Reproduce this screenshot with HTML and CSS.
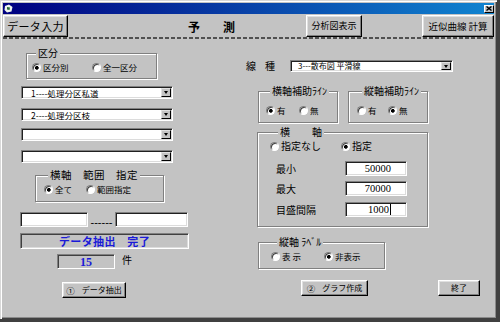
FILE: index.html
```html
<!DOCTYPE html>
<html lang="ja">
<head>
<meta charset="utf-8">
<title>予測</title>
<link rel="stylesheet" href="styles.css">
</head>
<body>
<div class="window">
  <div class="titlebar">
    <svg class="appicon" width="9" height="9" viewBox="0 0 9 9"><path d="M1 2 L5 0.5 L8.5 3 L7.5 7.5 L3 8.5 L0.5 6 Z" fill="#eef4ee"/><path d="M3 3 L6 3.5 L5.5 6 L3 5.5 Z" fill="#2a6a3a"/></svg>
    <span class="closebtn"><svg width="6" height="5" viewBox="0 0 6 5"><path d="M0.5 0.5 L5.5 4.5 M5.5 0.5 L0.5 4.5" stroke="#000" stroke-width="1.4"/></svg></span>
  </div>

  <div class="toolbar">
    <div class="btn tb-input">データ入力</div>
    <div class="caption"><span>予</span><span class="cap-2nd">測</span></div>
    <div class="btn tb-chart">分析図表示</div>
    <div class="btn tb-calc">近似曲線 計算</div>
  </div>

  <div class="client">
    <!-- 左側 -->
    <div class="col-left">
      <fieldset class="group g-kubun">
        <legend>区分</legend>
        <div class="radios small">
          <div class="radio on">区分別</div>
          <div class="radio">全一区分</div>
        </div>
      </fieldset>

      <div class="combo cb1"><span>1----処理分区私道</span><i></i></div>
      <div class="combo cb2"><span>2----処理分区枝</span><i></i></div>
      <div class="combo cb3"><span></span><i></i></div>
      <div class="combo cb4"><span></span><i></i></div>

      <fieldset class="group g-range">
        <legend>横軸　範囲　指定</legend>
        <div class="radios small">
          <div class="radio on">全て</div>
          <div class="radio">範囲指定</div>
        </div>
      </fieldset>

      <div class="range-row">
        <div class="field r1"></div>
        <span class="dashes">------</span>
        <div class="field r2"></div>
      </div>

      <div class="status">データ抽出　完了</div>

      <div class="count-row">
        <div class="count">15</div>
        <span class="unit">件</span>
      </div>

      <div class="btn small-btn b-extract"><span class="num">①</span>データ抽出</div>
    </div>

    <!-- 右側 -->
    <div class="col-right">
      <div class="linetype">
        <span class="lt-label">線</span><span class="lt-label">種</span>
        <div class="combo c-type"><span>3---散布図 平滑線</span><i></i></div>
      </div>

      <div class="aux-row">
        <fieldset class="group g-auxx">
          <legend>横軸補助ﾗｲﾝ</legend>
          <div class="radios small">
            <div class="radio on">有</div>
            <div class="radio">無</div>
          </div>
        </fieldset>
        <fieldset class="group g-auxy">
          <legend>縦軸補助ﾗｲﾝ</legend>
          <div class="radios small">
            <div class="radio">有</div>
            <div class="radio on">無</div>
          </div>
        </fieldset>
      </div>

      <fieldset class="group g-axis">
        <legend>横<span class="leg-gap">軸</span></legend>
        <div class="radios">
          <div class="radio">指定なし</div>
          <div class="radio on">指定</div>
        </div>
        <div class="axis-row a1"><span>最小</span><div class="field num-field">50000</div></div>
        <div class="axis-row a2"><span>最大</span><div class="field num-field">70000</div></div>
        <div class="axis-row a3"><span>目盛間隔</span><div class="field num-field">1000<i class="caret"></i></div></div>
      </fieldset>

      <fieldset class="group g-label">
        <legend>縦軸&nbsp;ﾗﾍﾞﾙ</legend>
        <div class="radios small">
          <div class="radio">表 示</div>
          <div class="radio on">非表示</div>
        </div>
      </fieldset>

      <div class="bottom-row">
        <div class="btn small-btn b-graph"><span class="num">②</span>グラフ作成</div>
        <div class="btn small-btn b-exit">終了</div>
      </div>
    </div>
  </div>
</div>
</body>
</html>
```

FILE: styles.css
```css
body { margin:0; background:#404040; font-family:"Noto Sans CJK JP","Noto Sans",sans-serif; font-size:10px; line-height:12px; color:#000; }

.window { width:497px; height:319px; box-sizing:border-box; padding:3px; background:#c3c3c3; display:flex; flex-direction:column;
  box-shadow: inset 1px 1px 0 #d8d8d8, inset 2px 2px 0 #fff, inset -1px -1px 0 #404040, inset -2px -2px 0 #8a8a8a; }

/* タイトルバー */
.titlebar { height:11px; flex:none; display:flex; align-items:center; justify-content:space-between; background:linear-gradient(to right,#000080,#1084d0); }
.appicon { margin-left:1px; }
.closebtn { width:10px; height:8px; box-sizing:border-box; background:#c3c3c3; display:flex; align-items:center; justify-content:center;
  border:1px solid; border-color:#fff #000 #000 #fff; }

/* ボタン */
.btn { box-sizing:border-box; flex:none; background:#c3c3c3; display:flex; align-items:center; justify-content:center; white-space:nowrap;
  border:1px solid; border-color:#fff #000 #000 #fff; box-shadow: inset -1px -1px 0 #808080, inset 1px 1px 0 #e0e0e0; }

.toolbar { height:23px; flex:none; display:flex; align-items:flex-start; padding-bottom:2px;
  background:repeating-linear-gradient(90deg,#505050 0 4px,transparent 4px 6px) left bottom / 490px 2px no-repeat; }
.toolbar .btn { margin-top:1px; height:22px; }
.tb-input { width:65px; font-size:11px; letter-spacing:0.3px; }
.caption { flex:none; margin-left:120px; margin-top:6px; display:flex; font-size:12px; line-height:14px; font-weight:bold; }
.caption .cap-2nd { margin-left:23px; }
.tb-chart { margin-left:71px; width:56px; font-size:9px; }
.tb-calc { margin-left:60px; width:72px; font-size:9.5px; }

.client { flex:1; display:flex; padding-left:17px; }
.col-left { width:226px; flex:none; display:flex; flex-direction:column; align-items:flex-start; }
.col-right { flex:1; display:flex; flex-direction:column; align-items:flex-start; }

/* グループ枠 */
.group { margin:0; padding:0; box-sizing:border-box; min-width:0; border:1px solid #808080; box-shadow: inset 1px 1px 0 #fff, 1px 1px 0 #fff; }
.group legend { padding:0 2px; margin-left:4px; font-size:10px; line-height:12px; background:#c3c3c3; white-space:nowrap; }

.radios { display:grid; height:14px; align-items:center; }
.radios.small { font-size:8.5px; }
.radio { display:flex; align-items:center; white-space:nowrap; line-height:12px; }
.radio::before { content:""; flex:none; width:9px; height:9px; box-sizing:border-box; margin-right:2px; border-radius:50%;
  border:1px solid; border-color:#808080 #fff #fff #808080; background:#fff; box-shadow: inset 1px 1px 0 #404040; }
.radio.on::before { background:radial-gradient(circle at 55% 55%, #000 0 1.5px, #fff 2.2px); }

.g-kubun { margin:8px 0 0 6px; width:131px; padding:1px 0 4px 5px; }
.g-kubun .radios { grid-template-columns:60px auto; }

.g-range { margin:6px 0 0 15px; width:129px; padding:1px 0 5px 8px; }
.g-range legend { font-size:10.5px; letter-spacing:0.5px; }
.g-range .radios { grid-template-columns:42px auto; }

/* コンボボックス */
.combo { box-sizing:border-box; height:13px; width:152px; margin-left:1px; background:#fff; display:flex; align-items:center; font-size:8.5px;
  border:1px solid; border-color:#808080 #fff #fff #808080; box-shadow: inset 1px 1px 0 #202020, inset -1px -1px 0 #dcdcdc; padding:1px; }
.combo span { flex:1; padding-left:8px; white-space:nowrap; overflow:hidden; line-height:10px; }
.combo i { flex:none; width:10px; height:100%; box-sizing:border-box; background:#c3c3c3; border:1px solid; border-color:#e0e0e0 #000 #000 #e0e0e0;
  display:flex; align-items:center; justify-content:center; }
.combo i::after { content:""; border-left:2.5px solid transparent; border-right:2.5px solid transparent; border-top:3px solid #000; }
.cb1 { margin-top:7px; }
.cb2 { margin-top:9px; }
.cb3 { margin-top:7px; }
.cb4 { margin-top:9px; }

/* 入力欄 */
.field { box-sizing:border-box; background:#fff; border:1px solid; border-color:#808080 #fff #fff #808080; box-shadow: inset 1px 1px 0 #202020, inset -1px -1px 0 #dcdcdc; }
.range-row { margin-top:10px; display:flex; align-items:center; height:15px; }
.range-row .field { height:15px; }
.r1 { width:68px; }
.r2 { width:73px; }
.dashes { width:27px; text-align:center; font-family:"Liberation Sans",sans-serif; font-size:11px; line-height:12px; margin-top:4px; }

.status { margin-top:6px; width:169px; height:16px; box-sizing:border-box; display:flex; align-items:center; justify-content:center;
  border:1px solid; border-color:#808080 #fff #fff #808080; box-shadow: inset 1px 1px 0 #404040, inset -1px -1px 0 #dcdcdc;
  color:#1a1ad8; font-weight:bold; font-size:11px; letter-spacing:0.4px; }

.count-row { margin-top:5px; margin-left:37px; display:flex; align-items:center; height:15px; }
.count { width:58px; height:15px; box-sizing:border-box; display:flex; align-items:center; justify-content:center;
  border:1px solid; border-color:#808080 #fff #fff #808080; box-shadow: inset 1px 1px 0 #404040;
  color:#1a1ad8; font-family:"Liberation Serif",serif; font-weight:bold; font-size:12px; }
.unit { margin-left:7px; margin-top:-3px; font-size:10px; }

.small-btn { height:16px; font-size:8px; }
.small-btn .num { margin-right:7px; font-size:8.5px; }
.b-extract { margin:13px 0 0 42px; width:64px; }

/* 右側 */
.linetype { margin-top:21px; display:flex; align-items:center; height:12px; }
.lt-label { font-size:10px; margin-right:9px; }
.c-type { width:163px; height:12px; margin-left:6px; font-size:8px; }
.c-type span { padding-left:6px; }

.aux-row { display:flex; margin-top:13px; }
.g-auxx { margin-left:12px; width:80px; padding:6px 0 5px 7px; }
.g-auxx .radios { grid-template-columns:33px auto; }
.g-auxy { margin-left:10px; width:80px; padding:6px 0 5px 8px; }
.g-auxy legend { margin-left:5px; }
.g-auxy .radios { grid-template-columns:31px auto; }

.g-axis { margin:3px 0 0 11px; width:171px; padding:1px 0 9px 12px; }
.g-axis legend { margin-left:8px; }
.g-axis .leg-gap { margin-left:22px; }
.g-axis .radios { grid-template-columns:71px auto; font-size:10px; }
.axis-row { display:flex; align-items:center; height:15px; padding-left:6px; font-size:10px; }
.axis-row span { width:69px; }
.a1 { margin-top:8px; }
.a2 { margin-top:5px; }
.a3 { margin-top:6px; }
.num-field { width:62px; height:15px; padding-right:15px; display:flex; align-items:center; justify-content:flex-end;
  font-family:"Liberation Serif",serif; font-size:10.5px; }
.caret { display:inline-block; width:1px; height:11px; background:#000; margin-left:1px; }

.g-label { margin:9px 0 0 12px; width:127px; padding:1px 0 5px 12px; }
.g-label legend { margin-left:6px; }
.g-label .radios { grid-template-columns:53px auto; }

.bottom-row { margin-top:11px; display:flex; }
.b-graph { margin-left:55px; width:67px; }
.b-exit { margin-left:70px; width:42px; }
```
